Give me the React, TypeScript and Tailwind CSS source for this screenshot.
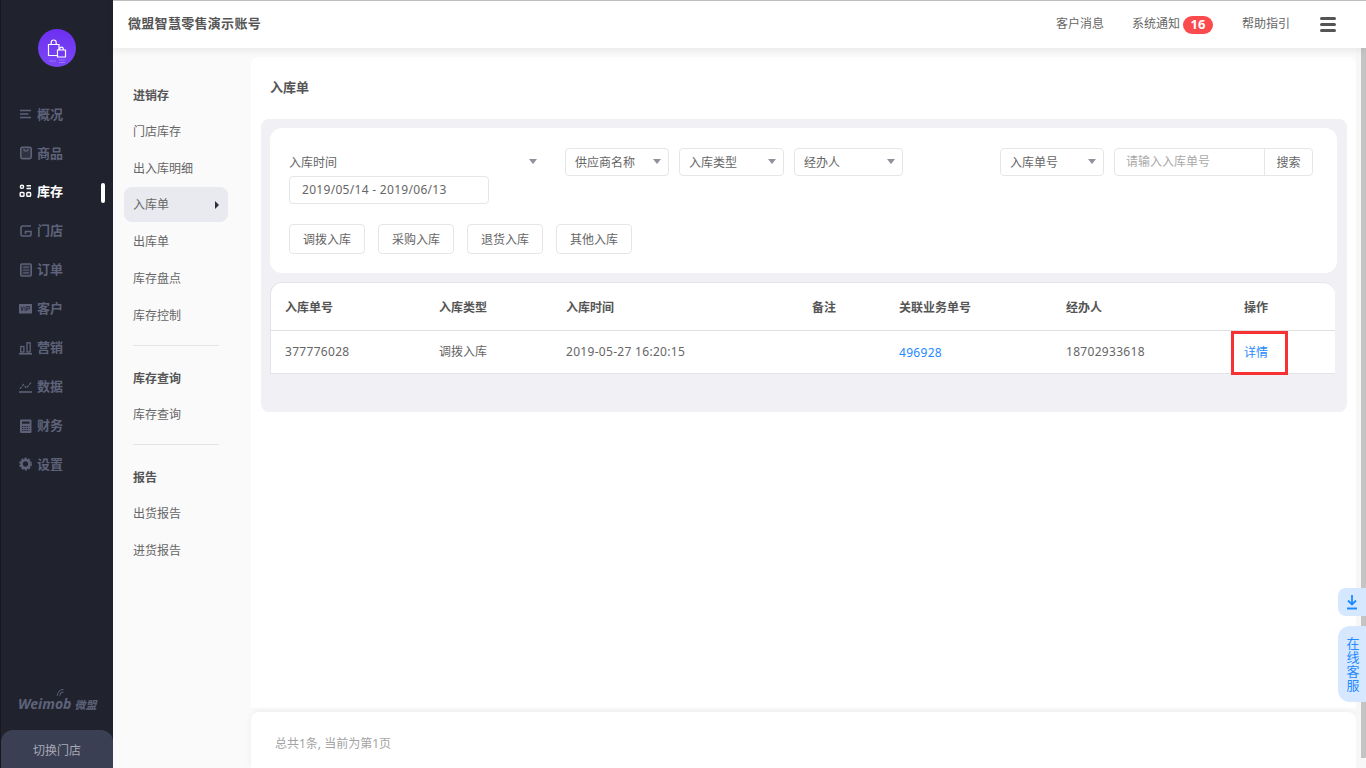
import type { ReactNode } from "react"

function Svg({ children }: { children: ReactNode }) {
  return (
    <svg width="18" height="18" viewBox="0 0 18 18" fill="none" stroke="currentColor" strokeWidth="1.6">
      {children}
    </svg>
  )
}

const navItems: { label: string; active?: boolean; icon: ReactNode }[] = [
  {
    label: "概况",
    icon: (
      <Svg>
        <path d="M1 5.5h11M1 9h8.5M1 12.5h11" />
      </Svg>
    ),
  },
  {
    label: "商品",
    icon: (
      <Svg>
        <rect x="1.8" y="3.2" width="10.4" height="11.4" rx="1.6" fill="currentColor" fillOpacity="0.25" />
        <path d="M4.8 4.5c0 3.6 4.4 3.6 4.4 0" strokeWidth="1.2" />
      </Svg>
    ),
  },
  {
    label: "库存",
    active: true,
    icon: (
      <Svg>
        <circle cx="3" cy="3.8" r="1.6" strokeWidth="1.4" />
        <path d="M7.5 2.8h4.5M7.5 5.5h4.5" strokeWidth="1.4" />
        <rect x="1.2" y="9.5" width="3.8" height="3.8" rx="0.8" strokeWidth="1.4" />
        <rect x="7.8" y="9.5" width="3.8" height="3.8" rx="0.8" strokeWidth="1.4" />
      </Svg>
    ),
  },
  {
    label: "门店",
    icon: (
      <Svg>
        <path d="M12 4H4C2.5 4 2 5 2 6v6.5c0 .8.5 1.5 1.5 1.5H11c.8 0 1-.6 1-1.2V9.5H6.5v2.5" />
      </Svg>
    ),
  },
  {
    label: "订单",
    icon: (
      <Svg>
        <rect x="1.8" y="3" width="10.4" height="12" rx="1" fill="currentColor" fillOpacity="0.2" />
        <path d="M4.2 6.2h5.6M4.2 9h5.6M4.2 11.8h5.6" strokeWidth="1.2" />
      </Svg>
    ),
  },
  {
    label: "客户",
    icon: (
      <Svg>
        <rect x="0" y="4" width="13" height="9.5" fill="currentColor" stroke="none" />
        <path d="M2 6.5l1.2 4.5 1.2-4.5M6 6.5V11M7.8 11V6.5h2.6v2.4H7.8" stroke="#20222e" strokeWidth="0.8" />
      </Svg>
    ),
  },
  {
    label: "营销",
    icon: (
      <Svg>
        <path d="M0 14.8h13" />
        <rect x="1.7" y="7.5" width="3.2" height="5.5" strokeWidth="1.3" />
        <rect x="8" y="3.8" width="3.2" height="9.2" strokeWidth="1.3" />
      </Svg>
    ),
  },
  {
    label: "数据",
    icon: (
      <Svg>
        <path d="M0 14h13" />
        <path d="M1 11l3.5-4.5 3 3.5 4.5-5.5" strokeWidth="1.2" strokeDasharray="2.6 1.1" />
      </Svg>
    ),
  },
  {
    label: "财务",
    icon: (
      <Svg>
        <rect x="1" y="2.5" width="11.5" height="13.5" rx="1" fill="currentColor" stroke="none" />
        <rect x="3" y="4.5" width="7.5" height="2.2" fill="#20222e" stroke="none" />
        <path d="M3 9.5h7.5M3 11.5h7.5M3 13.5h7.5" stroke="#20222e" strokeWidth="1" strokeDasharray="1.3 1" />
      </Svg>
    ),
  },
  {
    label: "设置",
    icon: (
      <Svg>
        <circle cx="6.5" cy="9" r="4" strokeWidth="2.6" />
        <circle cx="6.5" cy="9" r="5.7" strokeWidth="1.4" strokeDasharray="2.2 1.4" />
      </Svg>
    ),
  },
]

const subNav = [
  {
    title: "进销存",
    items: ["门店库存", "出入库明细", "入库单", "出库单", "库存盘点", "库存控制"],
  },
  { title: "库存查询", items: ["库存查询"] },
  { title: "报告", items: ["出货报告", "进货报告"] },
]

const columns = "grid grid-cols-[154px_127px_246px_87px_167px_178px_1fr] pl-[14px]"

function Caret() {
  return <span className="mb-[1px] h-0 w-0 border-x-[4.5px] border-t-[5px] border-x-transparent border-t-[#8f919c]" />
}

function Select({ label, width }: { label: string; width: string }) {
  return (
    <div
      className={"flex h-7 items-center justify-between rounded border border-[#e6e6e6] pl-[9px] pr-[7px] text-xs text-[#666] " + width}
    >
      <span className="pt-[2px]">{label}</span>
      <Caret />
    </div>
  )
}

function Sidebar() {
  return (
    <aside className="flex w-[113px] shrink-0 flex-col border-l border-[#16171f] bg-[#20222e]">
      <div className="ml-[37px] mt-[29px] flex h-[38px] w-[38px] items-start justify-center rounded-full bg-gradient-to-b from-[#6d2ff0] to-[#7a46f5]">
        <svg width="20" height="25" viewBox="0 0 20 25" fill="none" stroke="#fff" strokeWidth="1.2" className="mt-[10px]">
          <path d="M1.5 5.5h10.5v11H1.5z" />
          <path d="M4.2 5.5V3.4C4.2 2 5.2 1 6.7 1s2.5 1 2.5 2.4v2.1" />
          <path d="M10.5 11h8v7h-8z" fill="#7038f2" />
          <path d="M12.8 11V9.6c0-.9.7-1.5 1.7-1.5s1.7.6 1.7 1.5V11" />
          <path d="M2 22h7M12 21h6M12 23.5h6" strokeOpacity="0.25" />
        </svg>
      </div>
      <nav className="mt-[28px] flex flex-col">
        {navItems.map((item) => (
          <div
            key={item.label}
            className={
              "relative flex h-[38.9px] items-center pl-[18px] text-[13px] font-semibold " +
              (item.active ? "text-white" : "text-[#5e6279]")
            }
          >
            {item.icon}
            <span>{item.label}</span>
            {item.active && <span className="absolute right-[8px] top-[10px] h-5 w-1 rounded-sm bg-white" />}
          </div>
        ))}
      </nav>
      <div className="mt-auto flex items-start pb-[19px] pl-[17px]">
        <span className="relative text-[14px] font-bold italic leading-none text-[#5e6279]">
          Weimob
          <svg className="absolute right-[5px] top-[-10px]" width="10" height="10" viewBox="0 0 8 8" fill="none" stroke="#5e6279" strokeWidth="0.8">
            <path d="M1 7a5 5 0 0 1 5-5M3 7a3 3 0 0 1 3-3" />
          </svg>
        </span>
        <span className="ml-[3px] mt-[2px] text-[11px] font-bold italic leading-none text-[#5e6279]">微盟</span>
      </div>
      <div className="flex h-[38px] items-center justify-center rounded-t-xl bg-[#3b3f53] pt-[3px] text-xs text-[#a7a9b5]">切换门店</div>
    </aside>
  )
}

function SubNav() {
  return (
    <div className="w-[137px] shrink-0 bg-[#fafafa] pl-[11px] pr-[22px] pt-[29px]">
      {subNav.map((group, i) => (
        <div key={group.title}>
          {i > 0 && <div className="mb-[15px] ml-[9px] mt-[12px] h-px w-[86px] bg-[#e4e4e4]" />}
          <div className={"flex items-center pl-[9px] text-xs font-semibold text-[#555] " + (i === 0 ? "h-[37px]" : "h-[36px]")}>
            {group.title}
          </div>
          <div className="flex flex-col gap-[2px]">
            {group.items.map((item) => {
              const active = i === 0 && item === "入库单"
              return (
                <div
                  key={item}
                  className={
                    "flex h-[35px] items-center justify-between rounded-lg px-[9px] text-xs text-[#666] " +
                    (active ? "-mt-[1px] bg-[#e9eaef]" : "")
                  }
                >
                  {item}
                  {active && (
                    <span className="h-0 w-0 border-y-[4px] border-l-[4px] border-y-transparent border-l-[#2a2d3a]" />
                  )}
                </div>
              )
            })}
          </div>
        </div>
      ))}
    </div>
  )
}

function Filters() {
  return (
    <div className="h-[145px] rounded-xl bg-white pl-[19px] pr-[24px] pt-[20px]">
      <div className="flex items-start">
        <div className="w-[256px]">
          <div className="flex h-7 items-center justify-between pr-[8px] text-xs text-[#666]">
            <span className="pt-[2px]">入库时间</span>
            <Caret />
          </div>
          <div className="flex h-7 w-[200px] items-center rounded border border-[#e6e6e6] pl-3 text-xs tracking-[0.3px] text-[#666]">
            2019/05/14 - 2019/06/13
          </div>
        </div>
        <div className="ml-[20px] flex gap-[10px]">
          <Select label="供应商名称" width="w-[104px]" />
          <Select label="入库类型" width="w-[105px]" />
          <Select label="经办人" width="w-[109px]" />
        </div>
        <div className="ml-auto flex gap-[10px]">
          <Select label="入库单号" width="w-[104px]" />
          <div className="flex h-7 w-[199px] rounded border border-[#e6e6e6] text-xs">
            <div className="flex flex-1 items-center pl-[11px] text-[#a9a9a9]">请输入入库单号</div>
            <div className="flex w-[48px] items-center justify-center border-l border-[#e6e6e6] pt-[2px] text-[#666]">搜索</div>
          </div>
        </div>
      </div>
      <div className="mt-[20px] flex gap-[13px]">
        {["调拨入库", "采购入库", "退货入库", "其他入库"].map((b) => (
          <div key={b} className="flex h-[30px] w-[76px] items-center justify-center rounded border border-[#e6e6e6] pt-[2px] text-xs text-[#666]">
            {b}
          </div>
        ))}
      </div>
    </div>
  )
}

function RecordTable() {
  return (
    <div className="mt-[9px] w-[1065px] rounded-t-xl border-b border-l border-t border-[#e4e4e8] bg-white">
      <div className={columns + " h-[48px] items-center border-b border-[#dfdfe3] pt-[2px] text-xs font-semibold text-[#555]"}>
        {["入库单号", "入库类型", "入库时间", "备注", "关联业务单号", "经办人", "操作"].map((h) => (
          <div key={h}>{h}</div>
        ))}
      </div>
      <div className={columns + " h-[42px] items-center text-xs tracking-[0.3px] text-[#666]"}>
        <div>377776028</div>
        <div className="tracking-normal">调拨入库</div>
        <div>2019-05-27 16:20:15</div>
        <div />
        <div className="pt-[2px] text-[#2589ff]">496928</div>
        <div>18702933618</div>
        <div className="relative pt-[2px] tracking-normal text-[#2589ff]">
          详情
          <span className="absolute left-[-13px] top-[-12px] h-[44px] w-[57px] border-[3px] border-[#f73131]" />
        </div>
      </div>
    </div>
  )
}

export default function App() {
  return (
    <div className="flex h-screen overflow-hidden bg-[#fafafa] font-['Noto_Sans','Noto_Sans_CJK_SC',sans-serif]">
      <Sidebar />
      <div className="flex min-w-0 flex-1 flex-col">
        <header className="z-10 flex h-[48px] shrink-0 items-center border-t border-[#bdbdbd] bg-white pl-[15px] pr-[30px] shadow-[0_2px_8px_rgba(0,0,0,0.08)]">
          <div className="pb-[2px] text-[13px] font-semibold tracking-[0.3px] text-[#555]">微盟智慧零售演示账号</div>
          <div className="ml-auto flex items-center text-xs text-[#666]">
            <span className="pb-[2px]">客户消息</span>
            <span className="ml-[28px] pb-[2px]">系统通知</span>
            <span className="ml-[3px] flex h-[18px] w-[30px] items-center justify-center rounded-full bg-[#fb4b4f] text-[13px] font-bold text-white">
              16
            </span>
            <span className="ml-[29px] pb-[2px]">帮助指引</span>
            <span className="ml-[30px] flex w-4 flex-col gap-[3px]">
              <span className="h-[3px] rounded-sm bg-[#555]" />
              <span className="h-[3px] rounded-sm bg-[#555]" />
              <span className="h-[3px] rounded-sm bg-[#555]" />
            </span>
          </div>
        </header>
        <div className="flex min-h-0 flex-1">
          <SubNav />
          <main className="flex min-w-0 flex-1 flex-col pl-[1px] pt-[9px]">
            <div className="flex-1 rounded-t-lg bg-white">
              <div className="flex h-[62px] items-center pl-[19px] text-[13px] font-semibold text-[#555]">入库单</div>
              <div className="ml-[10px] h-[293px] w-[1086px] rounded-lg bg-[#f0f0f5] pl-[9px] pt-[9px]">
                <div className="w-[1067px]">
                  <Filters />
                  <RecordTable />
                </div>
              </div>
            </div>
            <div className="mt-[4px] flex h-[56px] shrink-0 items-center rounded-t-lg bg-white pl-[24px] pt-[8px] text-xs text-[#a3a3a3] shadow-[0_-1px_6px_rgba(0,0,0,0.06)]">
              总共1条, 当前为第1页
            </div>
          </main>
          <div className="flex w-[10px] shrink-0 justify-end bg-[#f7f7f7]">
            <div className="h-[710px] w-[5px] bg-[#c4c4c4]" />
          </div>
        </div>
      </div>
      <div className="fixed right-0 top-[588px] flex flex-col gap-[10px]">
        <div className="flex h-[28px] w-[28px] items-center justify-center rounded-l-lg bg-[#d6e8ff] text-[#1f8bff]">
          <svg width="14" height="16" viewBox="0 0 14 16" fill="none" stroke="currentColor" strokeWidth="1.8">
            <path d="M7 1v9M3 6.5L7 10.5l4-4M2 14.5h10" />
          </svg>
        </div>
        <div className="flex h-[76px] w-[28px] items-center justify-center rounded-l-xl bg-[#d6e8ff] text-[13px] leading-none tracking-[0.7px] text-[#2589ff] [writing-mode:vertical-rl]">
          在线客服
        </div>
      </div>
    </div>
  )
}
